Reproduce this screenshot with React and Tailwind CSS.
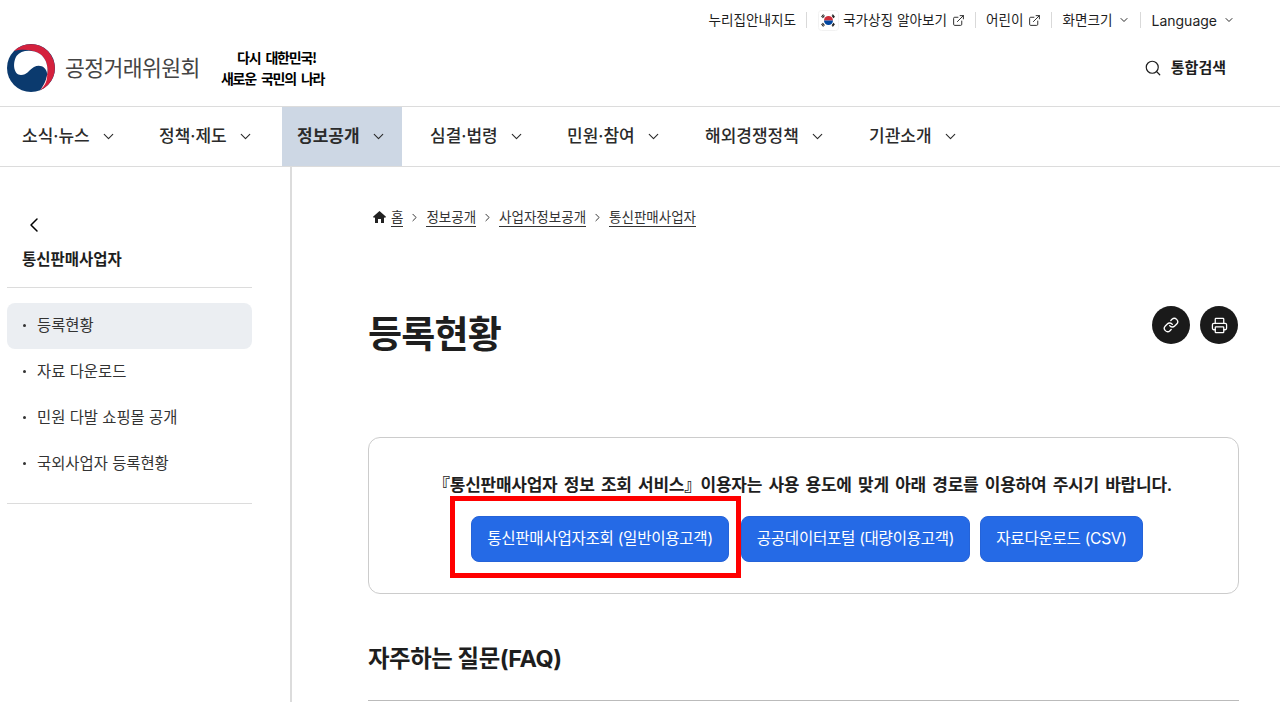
import { ChevronDown, ChevronLeft, ChevronRight, ExternalLink, Search, Link, Printer } from "lucide-react";

const fontFamily = "font-['Inter','Noto_Sans_CJK_KR',sans-serif]";

const navItems = [
  { label: "소식·뉴스", className: "w-[137px] pl-[22px] font-medium" },
  { label: "정책·제도", className: "w-[145px] pl-[22px] font-medium" },
  { label: "정보공개", className: "w-[120px] pl-[15px] bg-[#cdd7e4] font-bold text-[#1a1a1a]" },
  { label: "심결·법령", className: "w-[137px] pl-[28px] font-medium" },
  { label: "민원·참여", className: "w-[138px] pl-[28px] font-medium" },
  { label: "해외경쟁정책", className: "w-[164px] pl-[28px] font-medium" },
  { label: "기관소개", className: "w-[120px] pl-[28px] font-medium" },
];

const sideItems = ["등록현황", "자료 다운로드", "민원 다발 쇼핑몰 공개", "국외사업자 등록현황"];
const crumbs = ["정보공개", "사업자정보공개", "통신판매사업자"];

function Sep() {
  return <span className="mx-[10px] h-[16px] w-px bg-[#d9d9d9]" />;
}

function TopBar() {
  return (
    <div className="flex h-[40px] items-center justify-end pr-[45px] text-[13.6px] text-[#1e1e1e]">
      <span>누리집안내지도</span>
      <Sep />
      <svg width="21" height="21" viewBox="0 0 21 21" className="ml-[1px] mr-[4px]">
        <rect x="0.5" y="0.5" width="20" height="20" rx="3" fill="#fff" stroke="#f2f2f2" />
        <path d="M6 10.500a4.500 4.500 0 0 1 9 0z" fill="#cd2e3a" />
        <path d="M6 10.500a4.500 4.500 0 0 0 9 0z" fill="#0047a0" />
        <path d="M3.500 7l2-2.500M4.500 8l2-2.500M14.500 4.500l2 2.500M14 5.500l2 2.500M3.500 14l2 2.500M4.500 13l2 2.500M14.500 16.500l2-2.500M14 15.500l2-2.500" stroke="#222" strokeWidth="1.2" />
      </svg>
      <span>국가상징 알아보기</span>
      <ExternalLink size={13} strokeWidth={1.7} className="ml-[5px]" />
      <Sep />
      <span>어린이</span>
      <ExternalLink size={13} strokeWidth={1.7} className="ml-[5px]" />
      <Sep />
      <span>화면크기</span>
      <ChevronDown size={12} strokeWidth={1.9} className="ml-[6px]" />
      <Sep />
      <span className="text-[14px]">Language</span>
      <ChevronDown size={12} strokeWidth={1.9} className="ml-[6px]" />
    </div>
  );
}

function Logo() {
  return (
    <div className="flex items-center">
      <svg width="48" height="48" viewBox="0 0 48 48" className="ml-[7px]">
        <circle cx="24" cy="24" r="24" fill="#0b3a6e" />
        <path d="M7 7A24 24 0 1 1 33 46.300C42 36 44 18 33 10 25 5 14 5 7 7z" fill="#d4213d" />
        <path d="M33 46.300C42 36 44 18 33 10 25 5 14 6 9.500 12 5 20 7 31 14 31 20 31 22 26 27 23 33 20 39 23 40 29 41 36 38 42 33 46.300z" fill="#fff" />
      </svg>
      <span className="ml-[10px] text-[21.6px] tracking-[-0.6px] text-[#444]">공정거래위원회</span>
      <div className="ml-[21px] flex flex-col items-center text-[14px] leading-[21px] font-bold tracking-[-1.2px] [word-spacing:3px] text-black font-['Noto_Sans_CJK_KR',sans-serif]">
        <span className="pl-[8px]">다시 대한민국!</span>
        <span>새로운 국민의 나라</span>
      </div>
    </div>
  );
}

function MainNav() {
  return (
    <nav className="flex h-[61px] border-y border-[#dcdcdc]">
      {navItems.map((item) => (
        <div key={item.label} className={`flex items-center text-[17px] text-[#2b2b2b] ${item.className}`}>
          <span>{item.label}</span>
          <ChevronDown size={17} strokeWidth={1.6} className="ml-[10px]" />
        </div>
      ))}
    </nav>
  );
}

function Sidebar() {
  return (
    <aside className="w-[292px] shrink-0 border-r-2 border-[#dcdcdc] pl-[7px] pr-[38px]">
      <ChevronLeft size={24} strokeWidth={1.5} className="mt-[46px] ml-[15px]" />
      <h2 className="mt-[11px] pl-[15px] text-[15.5px] font-bold text-[#1e1e1e]">통신판매사업자</h2>
      <ul className="mt-[16px] border-y border-[#dcdcdc] pt-[15px] pb-[16px]">
        {sideItems.map((item, i) => (
          <li
            key={item}
            className={`flex h-[46px] items-center rounded-lg pb-[1px] pl-[16px] text-[15.4px] text-[#333] ${i === 0 ? "bg-[#ebeef2]" : ""}`}
          >
            <span className="mr-[11px] h-[3px] w-[3px] rounded-full bg-[#333]" />
            {item}
          </li>
        ))}
      </ul>
    </aside>
  );
}

function Breadcrumb() {
  return (
    <div className="flex h-[20px] items-center text-[13.5px] text-[#333]">
      <svg width="13" height="12" viewBox="0 0 13 12" className="mr-[5px]">
        <path d="M6.500 0L13 5.800 12 7 11 6.200V12H8V8H5V12H2V6.200L1 7 0 5.800z" fill="#222" />
      </svg>
      <span className="border-b border-[#333] leading-[18px]">홈</span>
      {crumbs.map((c) => (
        <div key={c} className="flex items-center">
          <ChevronRight size={13} strokeWidth={1.8} className="mx-[5px]" />
          <span className="border-b border-[#333] leading-[18px]">{c}</span>
        </div>
      ))}
    </div>
  );
}

function CircleBtn({ children }) {
  return (
    <button className="flex h-[38px] w-[38px] items-center justify-center rounded-full bg-[#1a1a1a] text-white">
      {children}
    </button>
  );
}

function BlueBtn({ children, className }) {
  return (
    <button className={`flex h-[46px] items-center justify-center rounded-lg border border-[#2563d8] bg-[#256ae6] text-[15.6px] tracking-[-0.3px] text-white ${className}`}>
      {children}
    </button>
  );
}

export default function App() {
  return (
    <div className={`relative h-[702px] w-[1280px] overflow-hidden bg-white ${fontFamily}`}>
      <TopBar />
      <div className="flex h-[66px] items-start justify-between pt-[4px] pr-[54px]">
        <Logo />
        <div className="mt-[13px] flex items-center gap-[9px] text-[15px] font-bold text-[#1e1e1e]">
          <Search size={18} strokeWidth={1.6} />
          통합검색
        </div>
      </div>
      <MainNav />

      <div className="flex h-[535px]">
        <Sidebar />
        <main className="flex-1 pl-[76px] pr-[41px]">
          <div className="mt-[40px] pl-[5px]">
            <Breadcrumb />
          </div>
          <div className="mt-[81px] flex items-start justify-between">
            <h1 className="text-[37px] leading-[54px] font-bold tracking-[-0.8px] text-[#1e1e1e]">등록현황</h1>
            <div className="-mt-[2px] mr-[1px] flex gap-[10px]">
              <CircleBtn><Link size={16} strokeWidth={2} /></CircleBtn>
              <CircleBtn><Printer size={17} strokeWidth={1.8} /></CircleBtn>
            </div>
          </div>
          <section className="mt-[75px] flex h-[157px] flex-col items-center rounded-xl border border-[#cccccc] pt-[34px]">
            <p className="-ml-[2px] text-[17px] leading-[26px] font-semibold tracking-[-0.25px] [word-spacing:2.3px] text-[#1e1e1e]">
              『통신판매사업자 정보 조회 서비스<span className="tracking-[-7px]">』</span> 이용자는 사용 용도에 맞게 아래 경로를 이용하여 주시기 바랍니다.
            </p>
            <div className="ml-[7px] mt-[18px] flex">
              <BlueBtn className="mr-[12px] w-[258px]">통신판매사업자조회 (일반이용고객)</BlueBtn>
              <BlueBtn className="mr-[10px] w-[229px]">공공데이터포털 (대량이용고객)</BlueBtn>
              <BlueBtn className="w-[163px]">자료다운로드 (CSV)</BlueBtn>
            </div>
          </section>
          <h2 className="mt-[47px] text-[23.4px] leading-[36px] font-bold tracking-[-0.4px] text-[#1e1e1e]">자주하는 질문(FAQ)</h2>
          <div className="mt-[23px] border-t border-[#bbb]" />
        </main>
      </div>

      {/* red highlight drawn over the first button */}
      <div className="absolute left-[450px] top-[496px] h-[82px] w-[291px] border-[5px] border-[#ff0000]" />
    </div>
  );
}
